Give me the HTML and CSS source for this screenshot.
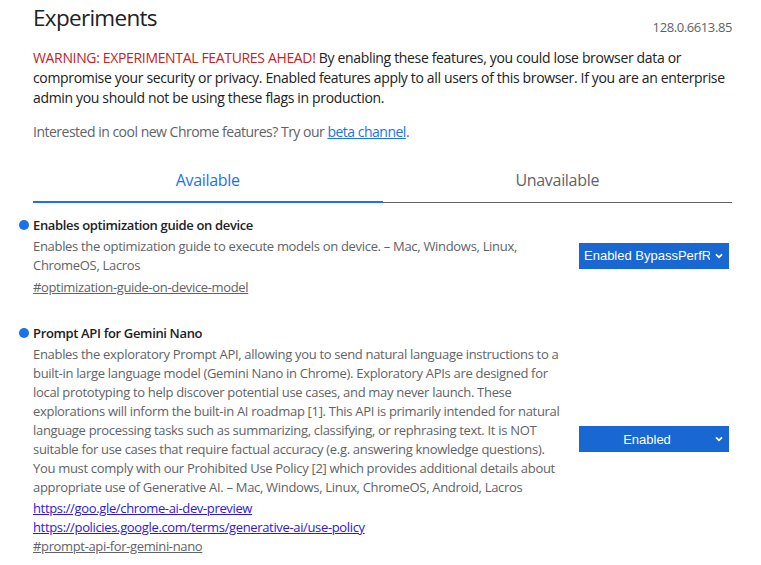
FILE: index.html
```html
<!DOCTYPE html>
<html lang="en">
<head>
<meta charset="utf-8">
<title>Experiments</title>
<link rel="stylesheet" href="styles.css">
</head>
<body>
<div class="page">
  <header class="header">
    <h1 class="title">Experiments</h1>
    <span class="version">128.0.6613.85</span>
  </header>
  <p class="warning"><span class="warn">WARNING: EXPERIMENTAL FEATURES AHEAD!</span> By enabling these features, you could lose browser data or<br>compromise your security or privacy. Enabled features apply to all users of this browser. If you are an enterprise<br>admin you should not be using these flags in production.</p>
  <p class="promo">Interested in cool new Chrome features? Try our <a class="promo-link" href="#">beta channel</a>.</p>
  <div class="tabs">
    <div class="tab tab-active">Available</div>
    <div class="tab">Unavailable</div>
  </div>

  <div class="flag flag-first">
    <div class="flag-text">
      <h2 class="flag-name">Enables optimization guide on device</h2>
      <p class="flag-desc">Enables the optimization guide to execute models on device. – Mac, Windows, Linux,<br>ChromeOS, Lacros</p>
      <div class="flag-links"><a class="hash" href="#">#optimization-guide-on-device-model</a></div>
    </div>
    <div class="select">
      <span class="select-text">Enabled BypassPerfRequirement</span>
      <svg class="chev" width="8" height="6" viewBox="0 0 8 6"><path d="M1 1.3 L4 4.3 L7 1.3" fill="none" stroke="#fff" stroke-width="1.8"/></svg>
    </div>
  </div>

  <div class="flag">
    <div class="flag-text">
      <h2 class="flag-name">Prompt API for Gemini Nano</h2>
      <p class="flag-desc">Enables the exploratory Prompt API, allowing you to send natural language instructions to a<br>built-in large language model (Gemini Nano in Chrome). Exploratory APIs are designed for<br>local prototyping to help discover potential use cases, and may never launch. These<br>explorations will inform the built-in AI roadmap [1]. This API is primarily intended for natural<br>language processing tasks such as summarizing, classifying, or rephrasing text. It is NOT<br>suitable for use cases that require factual accuracy (e.g. answering knowledge questions).<br>You must comply with our Prohibited Use Policy [2] which provides additional details about<br>appropriate use of Generative AI. – Mac, Windows, Linux, ChromeOS, Android, Lacros</p>
      <div class="flag-links">
        <a class="ext" href="#">https://goo.gle/chrome-ai-dev-preview</a>
        <a class="ext" href="#">https://policies.google.com/terms/generative-ai/use-policy</a>
        <a class="hash" href="#">#prompt-api-for-gemini-nano</a>
      </div>
    </div>
    <div class="select select-center">
      <span class="select-text">Enabled</span>
      <svg class="chev" width="8" height="6" viewBox="0 0 8 6"><path d="M1 1.3 L4 4.3 L7 1.3" fill="none" stroke="#fff" stroke-width="1.8"/></svg>
    </div>
  </div>
</div>
</body>
</html>
```

FILE: styles.css
```css
* { box-sizing: border-box; }
html, body { margin: 0; padding: 0; background: #fff; }
body {
  font-family: "Segoe UI", "Open Sans", "Noto Sans", sans-serif;
  color: #202124;
  overflow: hidden;
}
.page {
  width: 761px;
  padding: 0 29px 0 33px;
}
.header {
  display: flex;
  justify-content: space-between;
  align-items: flex-end;
  padding-top: 2px;
}
.title {
  margin: 0;
  font-size: 22.5px;
  font-weight: 400;
  line-height: 32px;
  letter-spacing: -0.7px;
}
.version {
  font-size: 13px;
  color: #5f6368;
  line-height: 20px;
  margin-bottom: -3px;
  letter-spacing: -0.4px;
}
.warning {
  margin: 14px 0 0;
  font-size: 14px;
  line-height: 20px;
  letter-spacing: -0.34px;
  white-space: nowrap;
}
.warn { color: #c5221f; }
.promo {
  margin: 14px 0 0;
  font-size: 14px;
  line-height: 20px;
  color: #5f6368;
  letter-spacing: -0.5px;
}
.promo-link { color: #1a73e8; }
.tabs {
  display: flex;
  margin-top: 27px;
  border-bottom: 1px solid #5f6368;
}
.tab {
  flex: 1;
  text-align: center;
  font-size: 16px;
  line-height: 22px;
  padding-bottom: 11px;
  color: #5f6368;
  letter-spacing: -0.3px;
}
.tab-active {
  color: #1a73e8;
  box-shadow: inset 0 -2px 0 #1a73e8;
  margin-bottom: -1px;
  padding-bottom: 12px;
}
.flag {
  display: flex;
  justify-content: space-between;
  align-items: center;
  margin-top: 26px;
}
.flag-first { margin-top: 12px; }
.flag-text { width: 540px; }
.flag-name {
  position: relative;
  margin: 0;
  font-size: 13px;
  font-weight: 600;
  line-height: 20px;
  letter-spacing: -0.35px;
}
.flag-name::before {
  content: "";
  position: absolute;
  left: -14px;
  top: 5px;
  width: 10px;
  height: 10px;
  border-radius: 50%;
  background: #1a73e8;
}
.flag-desc {
  margin: 2px 0 0;
  font-size: 13px;
  line-height: 19px;
  color: #5f6368;
  letter-spacing: -0.31px;
  white-space: nowrap;
}
.flag-links {
  display: flex;
  flex-direction: column;
  align-items: flex-start;
  margin-top: 2.5px;
  font-size: 13px;
  line-height: 19px;
  letter-spacing: -0.35px;
}
.ext { color: #2f16e0; }
.hash { color: #5f6368; }
.select {
  display: flex;
  align-items: center;
  width: 150px;
  height: 26px;
  background: #1967d2;
  color: #fff;
  font-family: "Liberation Sans", Arial, sans-serif;
  font-size: 13px;
  padding: 0 6px 0 5px;
  margin-right: 3px;
}
.select-text {
  flex: 1;
  overflow: hidden;
  white-space: nowrap;
}
.select-center .select-text { text-align: center; }
.chev { flex: none; margin-left: 5px; }
```
